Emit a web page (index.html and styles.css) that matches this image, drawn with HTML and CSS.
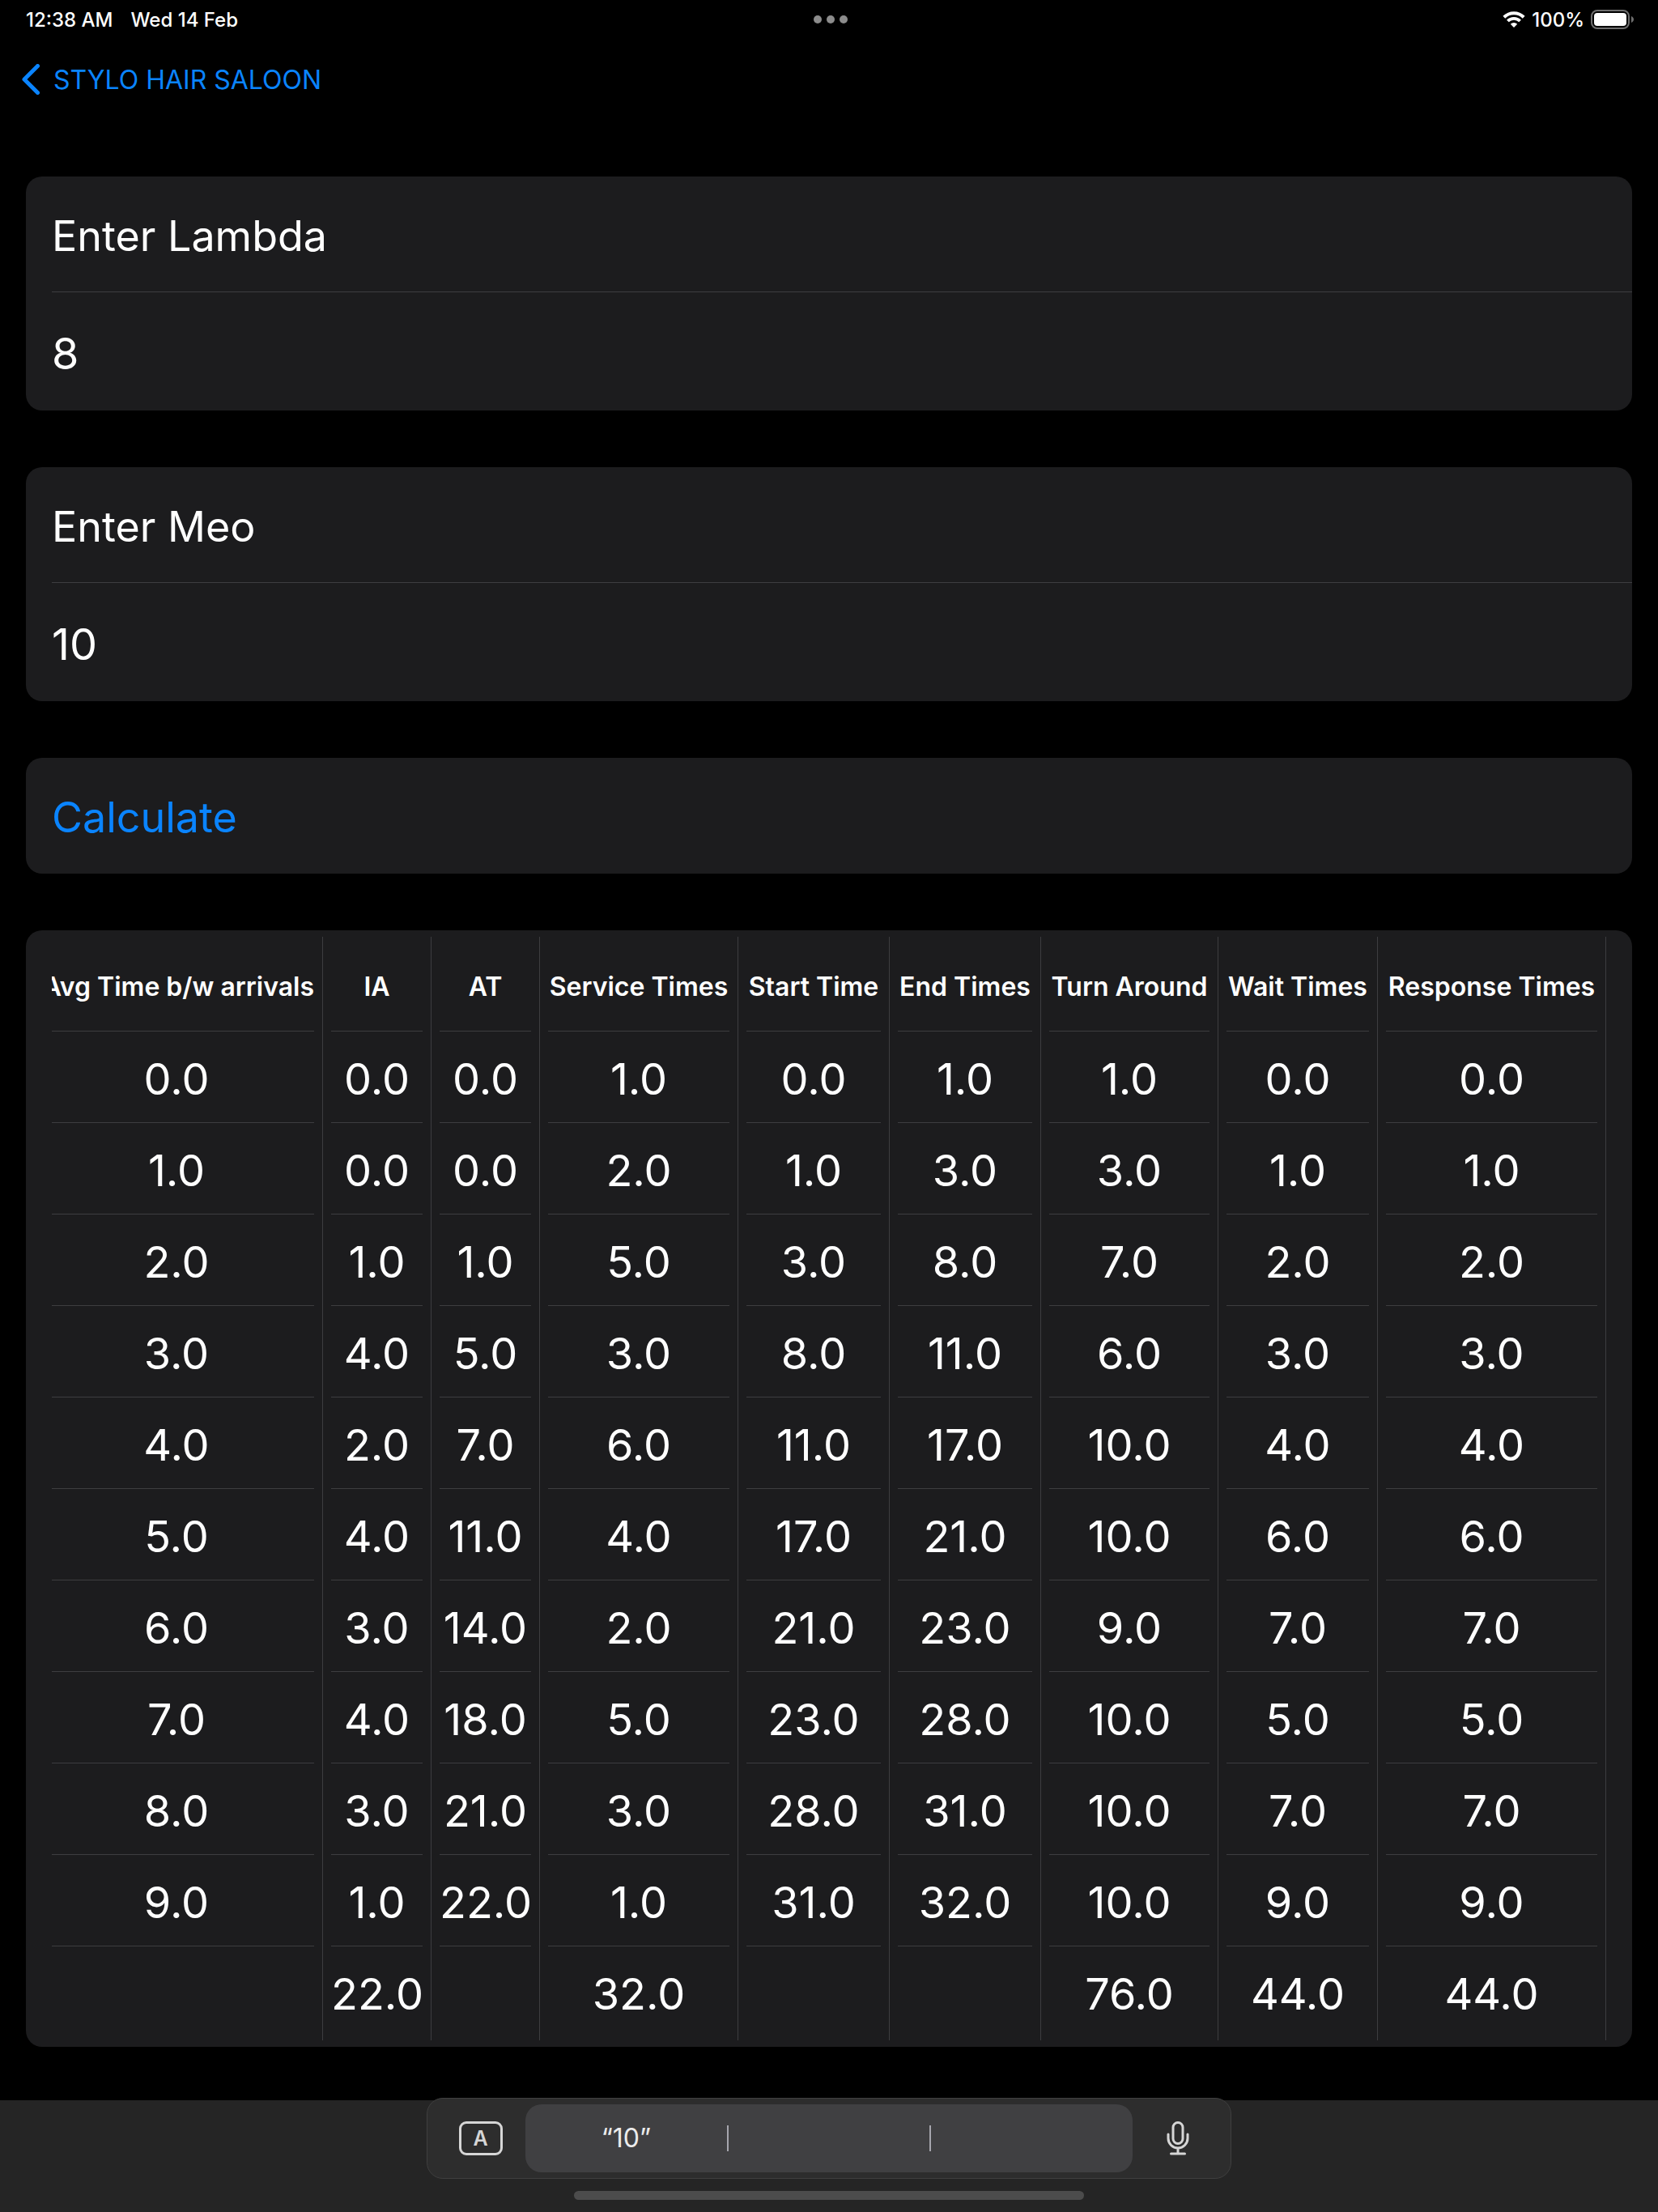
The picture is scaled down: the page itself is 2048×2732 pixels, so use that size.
FILE: index.html
```html
<!DOCTYPE html>
<html lang="en">
<head>
<meta charset="utf-8">
<meta name="viewport" content="width=device-width, initial-scale=1">
<title>Stylo Hair Saloon</title>
<link rel="stylesheet" href="styles.css">
</head>
<body>
<div class="status-bar">
  <div class="status-left"><span>12:38 AM</span><span>Wed 14 Feb</span></div>
  <svg class="status-dots" viewBox="0 0 42 10" aria-hidden="true"><circle cx="5" cy="5" r="5"/><circle cx="21" cy="5" r="5"/><circle cx="37" cy="5" r="5"/></svg>
  <div class="status-right">
    <svg class="wifi" viewBox="0 0 28 20" aria-hidden="true">
      <path d="M1.8 7.2A17.4 17.4 0 0 1 26.2 7.2" stroke-width="4"/>
      <path d="M6.4 12A10.8 10.8 0 0 1 21.6 12" stroke-width="3.8"/>
      <path class="wifi-dot" d="M14 20l-4.2-4.3a6 6 0 0 1 8.4 0z"/>
    </svg>
    <span>100%</span>
    <svg class="battery" viewBox="0 0 54 24" aria-hidden="true">
      <rect class="battery-case" x="1" y="1" width="46" height="22" rx="7"/>
      <rect class="battery-level" x="4" y="4" width="40" height="16" rx="4"/>
      <path class="battery-tip" d="M50 8c4 1.500 4 6.500 0 8z"/>
    </svg>
  </div>
</div>

<nav class="nav">
  <a class="back" href="#">
    <svg class="chevron" viewBox="0 0 22 38" aria-hidden="true"><path d="M19.500 2.500L3 19l16.500 16.500"/></svg>
    <span>STYLO HAIR SALOON</span>
  </a>
</nav>

<main class="form">
  <section class="card">
    <label class="row row-label" for="lambda">Enter Lambda</label>
    <input class="row row-input" id="lambda" type="text" inputmode="numeric" value="8">
  </section>
  <section class="card">
    <label class="row row-label" for="meo">Enter Meo</label>
    <input class="row row-input" id="meo" type="text" inputmode="numeric" value="10">
  </section>
  <section class="card">
    <button class="row row-button" type="button">Calculate</button>
  </section>
  <section class="card card-table">
    <div class="results-view">
    <table class="results">
      <colgroup><col class="c-avg"><col class="c-num"><col class="c-num"><col class="c-service"><col class="c-time"><col class="c-time"><col class="c-turn"><col class="c-wait"><col class="c-response"></colgroup>
      <thead>
        <tr><th scope="col">Avg Time b/w arrivals</th><th scope="col">IA</th><th scope="col">AT</th><th scope="col">Service Times</th><th scope="col">Start Time</th><th scope="col">End Times</th><th scope="col">Turn Around</th><th scope="col">Wait Times</th><th scope="col">Response Times</th></tr>
      </thead>
      <tbody>
        <tr><td>0.0</td><td>0.0</td><td>0.0</td><td>1.0</td><td>0.0</td><td>1.0</td><td>1.0</td><td>0.0</td><td>0.0</td></tr>
        <tr><td>1.0</td><td>0.0</td><td>0.0</td><td>2.0</td><td>1.0</td><td>3.0</td><td>3.0</td><td>1.0</td><td>1.0</td></tr>
        <tr><td>2.0</td><td>1.0</td><td>1.0</td><td>5.0</td><td>3.0</td><td>8.0</td><td>7.0</td><td>2.0</td><td>2.0</td></tr>
        <tr><td>3.0</td><td>4.0</td><td>5.0</td><td>3.0</td><td>8.0</td><td>11.0</td><td>6.0</td><td>3.0</td><td>3.0</td></tr>
        <tr><td>4.0</td><td>2.0</td><td>7.0</td><td>6.0</td><td>11.0</td><td>17.0</td><td>10.0</td><td>4.0</td><td>4.0</td></tr>
        <tr><td>5.0</td><td>4.0</td><td>11.0</td><td>4.0</td><td>17.0</td><td>21.0</td><td>10.0</td><td>6.0</td><td>6.0</td></tr>
        <tr><td>6.0</td><td>3.0</td><td>14.0</td><td>2.0</td><td>21.0</td><td>23.0</td><td>9.0</td><td>7.0</td><td>7.0</td></tr>
        <tr><td>7.0</td><td>4.0</td><td>18.0</td><td>5.0</td><td>23.0</td><td>28.0</td><td>10.0</td><td>5.0</td><td>5.0</td></tr>
        <tr><td>8.0</td><td>3.0</td><td>21.0</td><td>3.0</td><td>28.0</td><td>31.0</td><td>10.0</td><td>7.0</td><td>7.0</td></tr>
        <tr><td>9.0</td><td>1.0</td><td>22.0</td><td>1.0</td><td>31.0</td><td>32.0</td><td>10.0</td><td>9.0</td><td>9.0</td></tr>
      </tbody>
      <tfoot>
        <tr><td></td><td>22.0</td><td></td><td>32.0</td><td></td><td></td><td>76.0</td><td>44.0</td><td>44.0</td></tr>
      </tfoot>
    </table>
    </div>
  </section>
</main>

<footer class="dock">
  <div class="assist">
    <button class="assist-side" type="button" aria-label="Show keyboard"><span class="key">A</span></button>
    <div class="suggestions">
      <button class="suggestion" type="button">“10”</button>
      <button class="suggestion" type="button" aria-label="Suggestion 2"></button>
      <button class="suggestion" type="button" aria-label="Suggestion 3"></button>
    </div>
    <button class="assist-side" type="button" aria-label="Dictate">
      <svg class="mic" viewBox="0 0 28 42" aria-hidden="true"><rect x="8" y="1.500" width="12" height="26" rx="6"/><path d="M2 16v5a12 12 0 0 0 24 0v-5M14 33v7M5.500 40h17"/></svg>
    </button>
  </div>
  <div class="home-indicator"></div>
</footer>
</body>
</html>
```
FILE: styles.css
```css
* {
  box-sizing: border-box;
}

body {
  margin: 0;
  min-height: 100vh;
  display: flex;
  flex-direction: column;
  background: #000;
  color: #fff;
  font-family: Inter, "Liberation Sans", sans-serif;
  font-size: 54px;
}

button,
input {
  margin: 0;
  border: 0;
  padding: 0;
  background: none;
  color: inherit;
  font: inherit;
  outline: none;
}

/* Status bar */
.status-bar {
  display: grid;
  grid-template-columns: 1fr auto 1fr;
  align-items: center;
  height: 48px;
  padding: 0 29px 0 32px;
  font-size: 24px;
  font-weight: 500;
}

.status-left {
  display: flex;
  gap: 22px;
}

.status-dots {
  width: 42px;
  height: 10px;
  fill: #8c8c8c;
}

.status-right {
  display: flex;
  justify-content: flex-end;
  align-items: center;
  gap: 8px;
}

.wifi {
  width: 28px;
  height: 20px;
  fill: none;
  stroke: #fff;
}

.wifi-dot {
  fill: #fff;
  stroke: none;
}

.battery {
  width: 54px;
  height: 24px;
}

.battery-case {
  fill: none;
  stroke: #6e6e6e;
  stroke-width: 2;
}

.battery-level {
  fill: #fff;
}

.battery-tip {
  fill: #6e6e6e;
}

/* Navigation */
.nav {
  display: flex;
  align-items: center;
  height: 100px;
  padding: 0 27px;
}

.back {
  display: flex;
  align-items: center;
  gap: 17px;
  color: #0a84ff;
  font-size: 32px;
  text-decoration: none;
}

.chevron {
  width: 22px;
  height: 38px;
  fill: none;
  stroke: #0a84ff;
  stroke-width: 5;
  stroke-linecap: round;
  stroke-linejoin: round;
}

/* Grouped form */
.form {
  display: flex;
  flex-direction: column;
  gap: 70px;
  padding: 70px 32px 66px;
}

.card {
  display: flex;
  flex-direction: column;
  border-radius: 20px;
  padding-left: 32px;
  background: #1c1c1e;
}

.row {
  width: 100%;
  height: 143px;
  padding-top: 4px;
  text-align: left;
}

.row-label {
  display: flex;
  align-items: center;
  border-bottom: 1px solid #3d3d40;
  font-size: 52px;
}

.row-input {
  height: 146px;
}

.row-button {
  color: #0a84ff;
  font-size: 52px;
}

/* Results table: slightly wider than its view, scrolled to the right end */
.card-table {
  padding: 8px 32px;
}

.results-view {
  display: flex;
  justify-content: flex-end;
  overflow: hidden;
}

.results {
  flex: none;
  width: calc(100% + 16px);
  table-layout: fixed;
  border-collapse: separate;
  border-spacing: 0;
  text-align: center;
}

.c-avg { width: 351px; }
.c-num { width: 134px; }
.c-service { width: 245px; }
.c-time { width: 187px; }
.c-turn { width: 219px; }
.c-wait { width: 197px; }
.c-response { width: 282px; }

.results th,
.results td {
  height: 113px;
  padding: 3px 10px 0;
  border-right: 1px solid #3d3d40;
  background: linear-gradient(#3d3d40, #3d3d40) bottom / 100% 1px no-repeat content-box;
  white-space: nowrap;
}

.results th:first-child,
.results td:first-child {
  padding-left: 0;
}

.results th {
  height: 117px;
  padding-top: 6px;
  font-size: 32px;
  font-weight: 600;
}

.results th:first-child {
  text-align: right;
}

.results tfoot td {
  height: 116px;
  padding-top: 0;
  background: none;
}

/* Keyboard shortcut bar */
.dock {
  display: flex;
  flex-direction: column;
  align-items: center;
  gap: 15px;
  height: 138px;
  margin-top: auto;
  background: #252525;
}

.assist {
  display: flex;
  align-items: center;
  width: 994px;
  height: 100px;
  margin-top: -3px;
  border: 1px solid #3f3f3f;
  border-radius: 20px;
  padding: 0 10px;
  background: #2d2d2d;
}

.assist-side {
  display: flex;
  flex: 1;
  justify-content: center;
  align-items: center;
  color: #d6d6d6;
}

.key {
  display: flex;
  justify-content: center;
  align-items: center;
  width: 54px;
  height: 42px;
  border: 3px solid #d6d6d6;
  border-radius: 9px;
  font-size: 25px;
  font-weight: 600;
}

.suggestions {
  display: flex;
  align-items: center;
  width: 750px;
  height: 84px;
  border-radius: 20px;
  background: #404042;
}

.suggestion {
  flex: 1;
  height: 32px;
  color: #ececec;
  font-size: 32px;
  line-height: 32px;
}

.suggestion + .suggestion {
  border-left: 2px solid #a6a6ad;
}

.mic {
  width: 28px;
  height: 42px;
  fill: none;
  stroke: #d6d6d6;
  stroke-width: 3;
  stroke-linecap: round;
}

.home-indicator {
  width: 630px;
  height: 11px;
  border-radius: 6px;
  background: #4c4c4c;
}
```
